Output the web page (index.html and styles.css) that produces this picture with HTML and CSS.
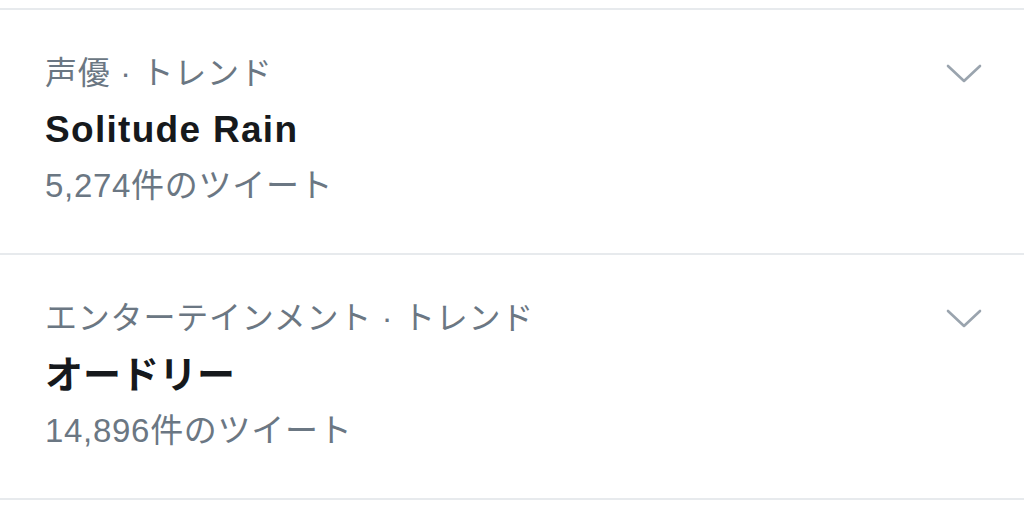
FILE: index.html
```html
<!DOCTYPE html>
<html lang="ja">
<head>
<meta charset="utf-8">
<link rel="stylesheet" href="styles.css">
</head>
<body>
<div class="list">
  <div class="trend">
    <div class="info">
      <div class="meta">声優 · トレンド</div>
      <div class="title">Solitude Rain</div>
      <div class="count">5,274件のツイート</div>
    </div>
    <svg class="chev" width="36" height="20" viewBox="0 0 36 20"><path d="M2 2 L18 17 L34 2" fill="none" stroke="#9aa4ae" stroke-width="2.6" stroke-linecap="round" stroke-linejoin="round"/></svg>
  </div>
  <div class="trend">
    <div class="info">
      <div class="meta">エンターテインメント · トレンド</div>
      <div class="title jp">オードリー</div>
      <div class="count">14,896件のツイート</div>
    </div>
    <svg class="chev" width="36" height="20" viewBox="0 0 36 20"><path d="M2 2 L18 17 L34 2" fill="none" stroke="#9aa4ae" stroke-width="2.6" stroke-linecap="round" stroke-linejoin="round"/></svg>
  </div>
</div>
</body>
</html>
```
FILE: styles.css
```css
html, body {
  margin: 0;
  padding: 0;
  background: #ffffff;
}
body {
  font-family: "Liberation Sans", "Noto Sans CJK JP", sans-serif;
  width: 1024px;
  height: 531px;
  overflow: hidden;
}
.list {
  padding-top: 8px;
}
.trend {
  display: flex;
  justify-content: space-between;
  align-items: flex-start;
  border-top: 2px solid #e7eaed;
  height: 243px;
  padding: 0 42px 0 45px;
}
.trend:last-child {
  border-bottom: 2px solid #e7eaed;
}
.info {
  padding-top: 36px;
}
.meta {
  font-size: 32px;
  line-height: 54px;
  letter-spacing: 0.8px;
  color: #6b7783;
}
.title {
  font-size: 37px;
  font-weight: bold;
  letter-spacing: 1.3px;
  line-height: 60px;
  color: #16191c;
}
.title.jp {
  font-size: 38px;
  letter-spacing: 0;
}
.count {
  font-size: 33px;
  line-height: 52px;
  letter-spacing: 0.7px;
  color: #6b7783;
}
.chev {
  margin-top: 54px;
}
```
